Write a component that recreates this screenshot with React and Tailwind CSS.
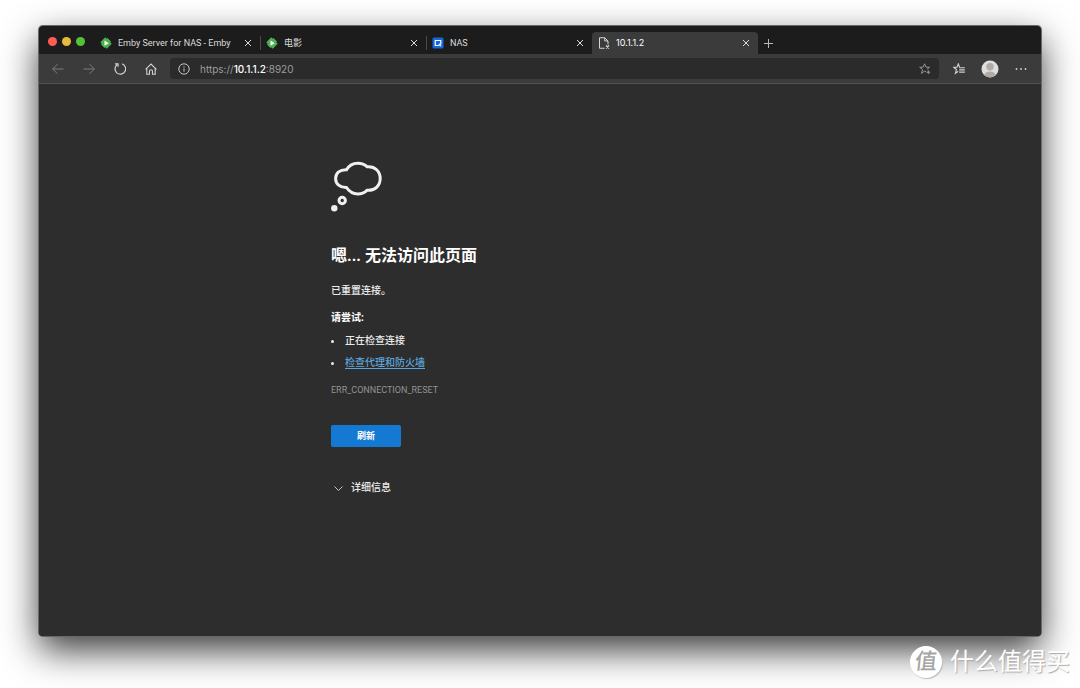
import React, { useState } from 'react';

const EmbyIcon = () => (
  <svg className="w-3 h-3 shrink-0" viewBox="0 0 24 24" aria-hidden="true">
    <path d="M10.5 .5 13.5 3.5 15 2 22 9 20.5 10.5 23.5 13.5 13.5 23.5 10.5 20.5 9 22 2 15 3.5 13.5 .5 10.5z" fill="#4caf50" />
    <path d="M9 7v10.5l8.5-5.25z" fill="#fff" />
  </svg>
);

const NasIcon = () => (
  <svg className="w-3 h-3 shrink-0" viewBox="0 0 24 24" aria-hidden="true">
    <rect x="1" y="1" width="22" height="22" rx="3" fill="#1568dc" />
    <path d="M14 17H6.5V7h11v8" fill="none" stroke="#fff" strokeWidth="2.4" />
    <path d="M13 13.5h3l3 4.8h-3.4z" fill="#fff" />
  </svg>
);

const ErrorPageIcon = () => (
  <svg className="w-3 h-3 shrink-0" viewBox="0 0 24 24" fill="none" stroke="#d6d6d6" strokeWidth="2" aria-hidden="true">
    <path d="M13 22.5H3v-21h10.5L20 8v7M13.5 1.5V8H20" />
    <path d="m16 17 6 6m0-6-6 6" strokeWidth="2.4" />
  </svg>
);

const CloseIcon = () => (
  <svg className="w-2 h-2" viewBox="0 0 8 8" fill="none" stroke="currentColor" aria-hidden="true">
    <path d="m1 1 6 6M7 1 1 7" />
  </svg>
);

const ArrowLeft = () => (
  <svg className="w-3 h-3" viewBox="0 0 12 12" fill="none" stroke="currentColor" aria-hidden="true">
    <path d="M.5 6h11M5.5 1.2.7 6l4.8 4.8" />
  </svg>
);

const ArrowRight = () => (
  <svg className="w-3 h-3" viewBox="0 0 12 12" fill="none" stroke="currentColor" aria-hidden="true">
    <path d="M.5 6h11M6.5 1.2 11.3 6l-4.8 4.8" />
  </svg>
);

const ReloadIcon = () => (
  <svg className="w-3 h-3" viewBox="0 0 12 12" fill="none" stroke="currentColor" strokeWidth="1.2" aria-hidden="true">
    <path d="M8.2.9A5.3 5.3 0 1 1 3 1.7M1 .8h3v3" />
  </svg>
);

const HomeIcon = () => (
  <svg className="w-3 h-3" viewBox="0 0 12 12" fill="none" stroke="currentColor" strokeWidth="1.1" aria-hidden="true">
    <path d="M.6 6.3 6 1l5.4 5.3M1.8 5.3v6h2.7V8.2a1.5 1.5 0 0 1 3 0v3.1h2.7v-6" />
  </svg>
);

const InfoIcon = () => (
  <svg className="w-3 h-3 text-[#c8c8c8]" viewBox="0 0 12 12" fill="none" stroke="currentColor" aria-hidden="true">
    <circle cx="6" cy="6" r="5.2" />
    <path d="M6 5.3v3.4M6 3.2v1.1" />
  </svg>
);

const StarAddIcon = () => (
  <svg className="w-3 h-3" viewBox="0 0 12 12" fill="none" stroke="currentColor" strokeWidth=".9" aria-hidden="true">
    <path d="M7 8.7 5.6 8 2.5 10.4l1-3.9L.7 4.3l3.5-.2L5.6.8 7 4.1l3.5.2-2.4 1.9M9.3 7.2v4M7.3 9.2h4" />
  </svg>
);

const FavoritesIcon = () => (
  <svg className="w-3 h-3" viewBox="0 0 12 12" fill="none" stroke="currentColor" strokeWidth="1.1" aria-hidden="true">
    <path d="M5.2 8.2 2.4 10.4l1-3.9L.7 4.3l3.3-.2L5.3.8l1.3 3.3M6.2 4.7h5.6M6.2 6.9h5.6M6.2 9.1h5.6" />
  </svg>
);

const AvatarIcon = () => (
  <svg className="w-[18px] h-[18px]" viewBox="0 0 18 18" aria-hidden="true">
    <clipPath id="avatar-clip">
      <circle cx="9" cy="9" r="8.5" />
    </clipPath>
    <circle cx="9" cy="9" r="8.5" fill="#e0dedc" />
    <g clipPath="url(#avatar-clip)" fill="#afaba7">
      <circle cx="9" cy="6.8" r="3.7" />
      <ellipse cx="9" cy="15.8" rx="6" ry="4.3" />
    </g>
  </svg>
);

const MoreIcon = () => (
  <svg className="w-3 h-3" viewBox="0 0 12 12" fill="currentColor" aria-hidden="true">
    <circle cx="1.5" cy="6" r=".9" />
    <circle cx="6" cy="6" r=".9" />
    <circle cx="10.5" cy="6" r=".9" />
  </svg>
);

const ThoughtBubble = () => (
  <svg className="w-[52px] h-[52px]" viewBox="0 0 52 52" fill="none" stroke="#f0f0f0" strokeWidth="3" aria-hidden="true">
    <path d="M15.5 8.7C18 4.5 22 2.2 26.8 2.2c4 0 7 1.3 9.5 3.6C44 5 49.2 10.5 49.2 17.5S44 30 36 29.3c-2.5 2.3-5.6 3.6-9.2 3.6-4.8 0-8.8-2.6-11.3-6.4C9 26.800 4.6 23 4.6 17.5S9 8.4 15.5 8.700z" />
    <circle cx="11.2" cy="39.5" r="3.2" />
    <circle cx="3.3" cy="47.3" r="3.2" fill="#f0f0f0" stroke="none" />
  </svg>
);

const initialTabs = [
  { id: 1, title: 'Emby Server for NAS - Emby', icon: EmbyIcon },
  { id: 2, title: '电影', icon: EmbyIcon },
  { id: 3, title: 'NAS', icon: NasIcon },
  { id: 4, title: '10.1.1.2', icon: ErrorPageIcon, active: true },
];

const Tab = ({ tab }) => {
  const Icon = tab.icon;
  return (
    <div
      className={`flex items-center flex-1 min-w-0 max-w-[166px] h-[22px] pl-1.5 pr-2 ${
        tab.active ? "bg-[#3b3b3b] text-white rounded-t font-['Inter','Noto_Sans_CJK_SC',sans-serif]" : 'text-[#dcdcdc]'
      }`}
    >
      <button type="button" className="flex items-center flex-1 min-w-0 gap-1.5 text-left">
        <Icon />
        <span className="truncate">{tab.title}</span>
      </button>
      <button type="button" aria-label="关闭标签页" className="text-[#dcdcdc]">
        <CloseIcon />
      </button>
    </div>
  );
};

const Toolbar = () => {
  const [focused, setFocused] = useState(false);

  return (
    <div className="flex items-center h-[30px] pl-[13px] pr-3.5 bg-[#3b3b3b] border-b border-[#525252] text-[#d2d2d2]">
      <nav className="flex items-center gap-[19px] pr-[13px]">
        <button type="button" aria-label="后退" className="text-[#7c7c7c]"><ArrowLeft /></button>
        <button type="button" aria-label="前进" className="text-[#7c7c7c]"><ArrowRight /></button>
        <button type="button" aria-label="刷新页面"><ReloadIcon /></button>
        <button type="button" aria-label="主页"><HomeIcon /></button>
      </nav>
      <div className={`flex items-center flex-1 min-w-0 h-[21px] px-2 gap-2.5 rounded-sm ${focused ? 'bg-[#222222]' : 'bg-[#2b2b2b]'}`}>
        <InfoIcon />
        <a
          href="https://10.1.1.2:8920"
          onFocus={() => setFocused(true)}
          onBlur={() => setFocused(false)}
          className="flex-1 truncate font-['Inter',sans-serif] text-[10px] leading-4 text-[#9c9c9c] outline-none"
        >
          https://<span className="font-medium text-white">10.1.1.2</span>:8920
        </a>
        <button type="button" aria-label="添加到收藏夹" className="text-[#a0a0a0]"><StarAddIcon /></button>
      </div>
      <div className="flex items-center gap-4 pl-3.5">
        <button type="button" aria-label="收藏夹"><FavoritesIcon /></button>
        <button type="button" aria-label="个人资料"><AvatarIcon /></button>
        <button type="button" aria-label="设置及其他"><MoreIcon /></button>
      </div>
    </div>
  );
};

const ErrorPage = () => (
  <main className="flex-1 bg-[#2d2d2d] px-8 pt-[77px] pb-10">
    <div className="max-w-[418px] mx-auto text-[10px] leading-4 font-medium text-[#ececec]">
      <ThoughtBubble />
      <h1 className="mt-[27px] text-[16px] leading-8 font-bold text-white">嗯... 无法访问此页面</h1>
      <p className="mt-[11px]">已重置连接。</p>
      <h2 className="mt-[11px] font-bold text-white">请尝试:</h2>
      <ul className="mt-[7px] space-y-1.5">
        <li className="flex items-center gap-[11px]">
          <span className="w-[3px] h-[3px] rounded-full bg-[#ececec]" />
          正在检查连接
        </li>
        <li className="flex items-center gap-[11px]">
          <span className="w-[3px] h-[3px] rounded-full bg-[#ececec]" />
          <a href="#proxy" className="text-[#5ca4dc] underline underline-offset-2">检查代理和防火墙</a>
        </li>
      </ul>
      <p className="mt-[11px] text-[9px] font-normal text-[#929292]">ERR_CONNECTION_RESET</p>
      <button type="button" className="block mt-[27px] w-[70px] h-[22px] rounded-xs bg-[#1479d2] text-[9px] font-bold text-white">
        刷新
      </button>
      <button type="button" className="flex items-center mt-[33px] pl-[3px] gap-2">
        <svg className="w-[9px] h-[9px]" viewBox="0 0 9 9" fill="none" stroke="#c4c4c4" aria-hidden="true">
          <path d="m.5 2.5 4 4 4-4" />
        </svg>
        详细信息
      </button>
    </div>
  </main>
);

const Watermark = () => (
  <div className="absolute bottom-2.5 right-2.5 flex items-center gap-2 text-white pointer-events-none">
    <span className="flex items-center justify-center w-8 h-8 rounded-full bg-white text-[22px] leading-8 font-medium text-[#a5a5a5] shadow-[1px_1px_1px_#bbbbbb]">
      <span className="-skew-x-6">值</span>
    </span>
    <span className="text-[24px] leading-8 [text-shadow:1px_1px_1px_#aaaaaa]">什么值得买</span>
  </div>
);

const App = () => {
  return (
    <div className="relative flex flex-col min-h-screen overflow-hidden bg-white px-[39px] pt-[26px] pb-[52px] font-['Roboto','Noto_Sans_CJK_SC',sans-serif]">
      <div className="flex flex-col flex-1 overflow-hidden rounded-[4px] bg-[#1c1c1c] shadow-[0_0_0_1px_#686868,0_14px_36px_rgba(0,0,0,0.78)]">
        <header className="flex h-7 text-[9px] leading-4">
          <div className="flex items-center gap-[5px] h-[30px] px-[9px]">
            <span className="w-[9px] h-[9px] rounded-full bg-[#ff5c55]" />
            <span className="w-[9px] h-[9px] rounded-full bg-[#e4bb3b]" />
            <span className="w-[9px] h-[9px] rounded-full bg-[#53c236]" />
          </div>
          <div className="flex items-end flex-1 min-w-0">
            {initialTabs.map((tab, index) => (
              <React.Fragment key={tab.id}>
                {(index === 1 || index === 2) && <span className="w-px h-3.5 mb-1 -mr-px bg-[#4a4a4a]" />}
                <Tab tab={tab} />
              </React.Fragment>
            ))}
            <button type="button" aria-label="新建标签页" className="flex items-center h-[22px] pl-1.5 text-[#b8b8b8]">
              <svg className="w-[9px] h-[9px]" viewBox="0 0 9 9" fill="none" stroke="currentColor" aria-hidden="true">
                <path d="M4.5 0v9M0 4.5h9" />
              </svg>
            </button>
          </div>
        </header>
        <Toolbar />
        <ErrorPage />
      </div>
      <Watermark />
    </div>
  );
};

export default App;
